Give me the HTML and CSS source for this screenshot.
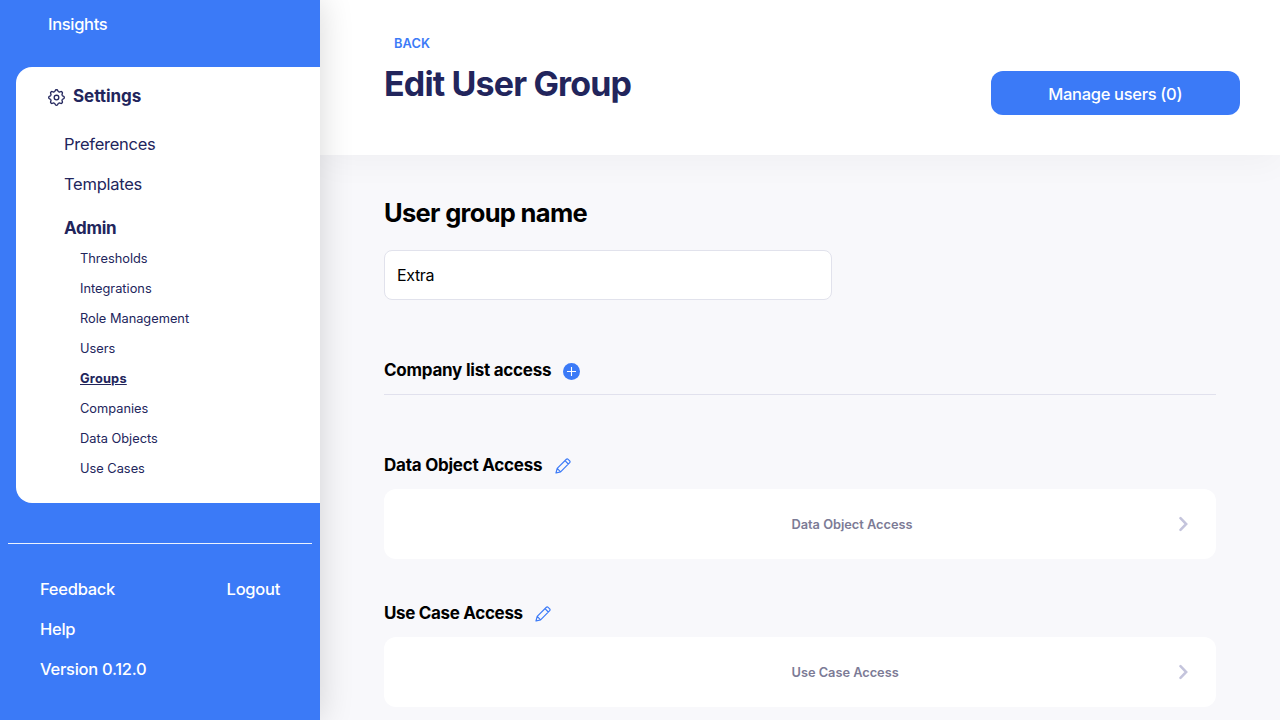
FILE: index.html
```html
<!DOCTYPE html>
<html lang="en">
<head>
<meta charset="utf-8">
<title>Edit User Group</title>
<link rel="stylesheet" href="styles.css">
</head>
<body>
<svg width="0" height="0" class="defs" aria-hidden="true">
  <defs>
    <path id="tooth" d="M-2.33-5.64Q-1.5-5.98-1.3-6.9Q-1.1-7.8 0-7.8Q1.1-7.8 1.3-6.9Q1.5-5.98 2.33-5.64"/>
    <symbol id="pencil" viewBox="0 0 16 16">
      <path d="M1 15l1.2-4.6L11.4 1.3a1.2 1.2 0 0 1 1.7 0l1.6 1.6a1.2 1.2 0 0 1 0 1.7L5.6 13.8zM2.2 10.4l3.4 3.4M10 2.7L13.3 6" fill="none" stroke="#3b7af7" stroke-width="1.2" stroke-linejoin="round"/>
    </symbol>
    <symbol id="chevron" viewBox="0 0 10 16">
      <path d="M1.5 2.2L7.2 8l-5.7 5.8" fill="none" stroke="#c4c4dc" stroke-width="2.5" stroke-linecap="round" stroke-linejoin="miter"/>
    </symbol>
  </defs>
</svg>
<div class="app">
  <aside class="sidebar">
    <a class="nav-top"><span>Insights</span></a>
    <nav class="panel">
      <div class="panel-title">
        <svg class="gear" viewBox="-8.5 -8.5 17 17" fill="none" stroke="#22255c" stroke-width="1.35">
          <use href="#tooth"/><use href="#tooth" transform="rotate(45)"/><use href="#tooth" transform="rotate(90)"/><use href="#tooth" transform="rotate(135)"/><use href="#tooth" transform="rotate(180)"/><use href="#tooth" transform="rotate(225)"/><use href="#tooth" transform="rotate(270)"/><use href="#tooth" transform="rotate(315)"/>
          <circle r="2.3"/>
        </svg>
        <span>Settings</span>
      </div>
      <a class="item"><span>Preferences</span></a>
      <a class="item"><span>Templates</span></a>
      <a class="item item-admin"><span>Admin</span></a>
      <div class="sub">
        <a>Thresholds</a>
        <a>Integrations</a>
        <a>Role Management</a>
        <a>Users</a>
        <a class="active">Groups</a>
        <a>Companies</a>
        <a>Data Objects</a>
        <a>Use Cases</a>
      </div>
    </nav>
    <footer class="side-foot">
      <div class="foot-row"><a>Feedback</a><a>Logout</a></div>
      <div class="foot-row"><a>Help</a></div>
      <div class="foot-row"><span>Version 0.12.0</span></div>
    </footer>
  </aside>
  <main class="main">
    <header class="header">
      <div>
        <a class="back">BACK</a>
        <h1>Edit User Group</h1>
      </div>
      <button class="manage">Manage users (0)</button>
    </header>
    <div class="content">
      <h2>User group name</h2>
      <input class="name" type="text" value="Extra">
      <section class="company">
        <h3>Company list access</h3>
        <svg class="plus" viewBox="0 0 17 17"><circle cx="8.5" cy="8.5" r="8.5" fill="#3b7af7"/><path d="M8.5 4v9M4 8.5h9" stroke="#fff" stroke-width="1.1"/></svg>
      </section>
      <section class="access">
        <div class="access-title"><h3>Data Object Access</h3><svg class="pencil"><use href="#pencil"/></svg></div>
        <div class="card"><span>Data Object Access</span><svg class="chev"><use href="#chevron"/></svg></div>
      </section>
      <section class="access">
        <div class="access-title"><h3 class="tight">Use Case Access</h3><svg class="pencil"><use href="#pencil"/></svg></div>
        <div class="card"><span>Use Case Access</span><svg class="chev"><use href="#chevron"/></svg></div>
      </section>
    </div>
  </main>
</div>
</body>
</html>
```
FILE: styles.css
```css
* { box-sizing: border-box; }
body { margin: 0; font-family: Inter, "Liberation Sans", sans-serif; font-size: 16.5px; letter-spacing: -0.27px; color: #000; }
svg { display: block; flex: none; }
.defs { position: absolute; }
.app { display: flex; width: 1280px; height: 720px; overflow: hidden; }
.sidebar { width: 320px; flex: none; background: #3b7af7; color: #fff; font-weight: 450; position: relative; z-index: 2; box-shadow: 0 0 32px rgba(0, 0, 0, 0.16); }
.nav-top { display: flex; align-items: center; height: 48px; padding-left: 48px; letter-spacing: -0.32px; }
.panel { margin: 19px 0 0 16px; height: 436px; padding: 9px 0 0 32px; background: #fff; color: #22255c; font-weight: 400; border-radius: 16px 0 0 16px; }
.panel-title { display: flex; align-items: center; gap: 8px; height: 40px; font-size: 17px; font-weight: 700; letter-spacing: -0.05px; }
.gear { width: 17px; height: 17px; margin-top: 2px; }
.item { display: flex; align-items: center; height: 40px; padding-left: 16px; }
.panel-title + .item { margin-top: 8px; }
.item-admin { margin-top: 4px; font-size: 17px; font-weight: 700; letter-spacing: -0.3px; }
.sub { display: flex; flex-direction: column; padding: 0 0 0 32px; margin-top: -4px; font-size: 12.8px; letter-spacing: 0; }
.sub a { height: 30px; line-height: 30px; }
.sub .active { font-weight: 700; letter-spacing: 0.2px; text-decoration: underline; }
.side-foot { margin: 40px 8px 0; padding: 25px 32px 0; border-top: 1px solid rgba(255, 255, 255, 0.9); }
.foot-row { display: flex; justify-content: space-between; align-items: center; height: 40px; }
.main { flex: 1; background: #f8f8fb; }
.header { display: flex; justify-content: space-between; align-items: flex-start; height: 155px; padding: 34px 40px 0 64px; background: #fff; box-shadow: 0 8px 32px rgba(0, 0, 0, 0.035); }
.back { display: block; padding-left: 10px; font-size: 12.8px; line-height: 20px; font-weight: 600; letter-spacing: 0.1px; color: #3b7af7; }
h1 { margin: 9px 0 0; font-size: 34px; line-height: 42px; letter-spacing: -0.85px; color: #22255c; }
.manage { width: 249.5px; height: 44px; margin-top: 37px; padding: 2px 0 0; border: 0; border-radius: 12px; background: #3b7af7; color: #fff; font: inherit; font-weight: 450; letter-spacing: -0.32px; }
.content { padding: 42px 64px 0; }
h2 { margin: 0; font-size: 25.5px; line-height: 32px; letter-spacing: -0.68px; }
h3 { margin: 0; font-size: 17px; line-height: 24px; letter-spacing: -0.24px; }
.tight { letter-spacing: -0.33px; }
.name { display: block; width: 448px; height: 50px; margin-top: 21px; padding: 0 12px; border: 1px solid #e1e2ec; border-radius: 8px; background: #fff; font: inherit; font-size: 16px; letter-spacing: -0.35px; color: #000; outline: none; }
.company { display: flex; gap: 12px; height: 37px; margin-top: 58px; border-bottom: 1px solid #e1e1ed; }
.plus { width: 17px; height: 17px; margin-top: 5px; }
.access { margin-top: 42px; }
.company + .access { margin-top: 58px; }
.access-title { display: flex; gap: 12.5px; height: 36px; }
.pencil { width: 16px; height: 16px; margin-top: 5px; }
.card { display: flex; align-items: center; height: 70px; padding: 0 27px 0 407.5px; border-radius: 12px; background: #fff; font-size: 12.8px; font-weight: 600; letter-spacing: -0.02px; color: #7c7b96; }
.chev { width: 10px; height: 16px; margin-left: auto; }
```
